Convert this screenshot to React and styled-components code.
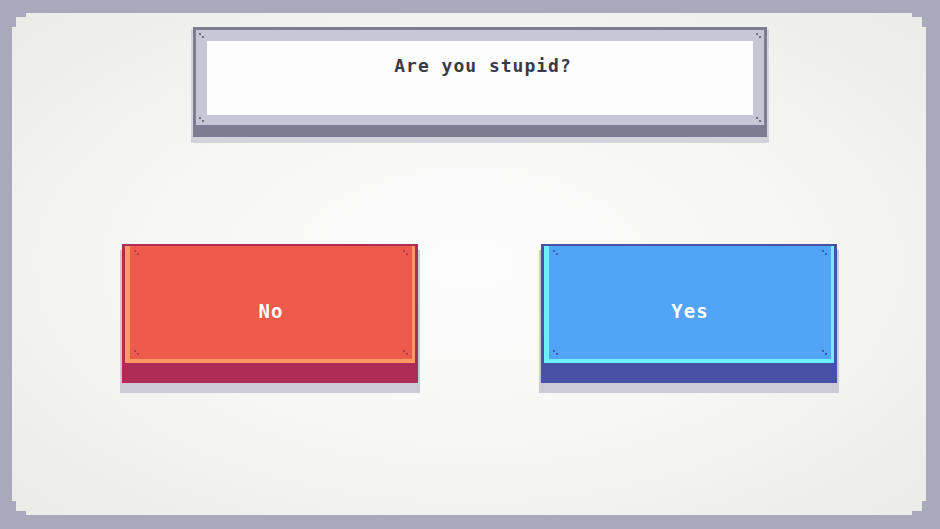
import React from 'react';
import styled, { createGlobalStyle } from 'styled-components';

const GlobalStyle = createGlobalStyle`
    html, body {
        margin: 0;
        padding: 0;
        background: #aaa9bc;
    }
    body {
        font-family: "DejaVu Sans Mono", "Liberation Mono", monospace;
    }
`;

const Screen = styled.div`
    width: 940px;
    height: 529px;
    box-sizing: border-box;
    padding: 13px 14px 14px 12px;
    background: #aaa9bc;
`;

// stepped pixel corners on the main panel
const Panel = styled.div`
    height: 100%;
    display: flex;
    flex-direction: column;
    align-items: center;
    background: radial-gradient(ellipse at 50% 50%, #fcfcfc 0%, #f7f7f6 45%, #ebebea 100%);
    clip-path: polygon(
        14px 0, calc(100% - 14px) 0, calc(100% - 14px) 4px, calc(100% - 4px) 4px,
        calc(100% - 4px) 14px, 100% 14px, 100% calc(100% - 14px), calc(100% - 4px) calc(100% - 14px),
        calc(100% - 4px) calc(100% - 4px), calc(100% - 14px) calc(100% - 4px), calc(100% - 14px) 100%,
        14px 100%, 14px calc(100% - 4px), 4px calc(100% - 4px), 4px calc(100% - 14px),
        0 calc(100% - 14px), 0 14px, 4px 14px, 4px 4px, 14px 4px
    );
`;

const Dialog = styled.div`
    margin: 14px 0 0 22px;
    width: 574px;
    box-sizing: border-box;
    padding: 3px 3px 12px 3px;
    background: #7d7c90;
    box-shadow: 0 4px 0 2px #d3d3db;
`;

const DialogFrame = styled.div`
    position: relative;
    padding: 11px 11px 10px 11px;
    background: #c7c6d6;
`;

const DialogBody = styled.div`
    height: 74px;
    box-sizing: border-box;
    padding: 16px 0 0 6px;
    display: flex;
    justify-content: center;
    background: #fdfdfd;
    color: #3a3a47;
    font-size: 18px;
    line-height: 18px;
    font-weight: bold;
    letter-spacing: 1px;
`;

// two tiny squares set on a diagonal
const Rivet = styled.span`
    position: absolute;
    width: 2px;
    height: 2px;
    background: ${p => p.color};
    box-shadow: 3px 3px 0 ${p => p.color};
    ${p => (p.top ? `top: ${p.inset}px;` : `bottom: ${p.inset + 3}px;`)}
    ${p => (p.left ? `left: ${p.inset}px;` : `right: ${p.inset + 3}px;`)}
`;

const Choices = styled.div`
    align-self: stretch;
    display: flex;
    gap: 123px;
    margin-top: 107px;
    padding-left: 110px;
`;

const themes = {
    no: { edge: '#ae2d57', face: '#ee5b4c', light: '#fb9a62', rivet: '#b73a4b' },
    yes: { edge: '#4752a6', face: '#51a4f6', light: '#6cf0fb', rivet: '#3b5ba8' }
};

const ChoiceButton = styled.button`
    width: 296px;
    box-sizing: border-box;
    padding: 2px 3px 20px 3px;
    border: none;
    background: ${p => themes[p.kind].edge};
    box-shadow: 0 8px 0 2px #cbcad5;
    cursor: pointer;
    font-family: inherit;
`;

const ButtonFace = styled.div`
    position: relative;
    height: 117px;
    box-sizing: border-box;
    padding-top: 56px;
    display: flex;
    justify-content: center;
    background: ${p => themes[p.kind].face};
    border-left: 5px solid ${p => themes[p.kind].light};
    border-right: 3px solid ${p => themes[p.kind].light};
    border-bottom: 4px solid ${p => themes[p.kind].light};
    color: #fff;
    font-size: 19px;
    line-height: 19px;
    font-weight: bold;
    letter-spacing: 1px;
`;

const Rivets = ({ color, inset }) => (
    <>
        <Rivet color={color} inset={inset} top left />
        <Rivet color={color} inset={inset} top />
        <Rivet color={color} inset={inset} left />
        <Rivet color={color} inset={inset} />
    </>
);

const Choice = ({ kind, label }) => (
    <ChoiceButton kind={kind}>
        <ButtonFace kind={kind}>
            <Rivets color={themes[kind].rivet} inset={4} />
            {label}
        </ButtonFace>
    </ChoiceButton>
);

const App = () => {
    return (
        <Screen>
            <GlobalStyle />
            <Panel>
                <Dialog>
                    <DialogFrame>
                        <Rivets color="#6d6c80" inset={3} />
                        <DialogBody>Are you stupid?</DialogBody>
                    </DialogFrame>
                </Dialog>
                <Choices>
                    <Choice kind="no" label="No" />
                    <Choice kind="yes" label="Yes" />
                </Choices>
            </Panel>
        </Screen>
    );
};

export default App;
